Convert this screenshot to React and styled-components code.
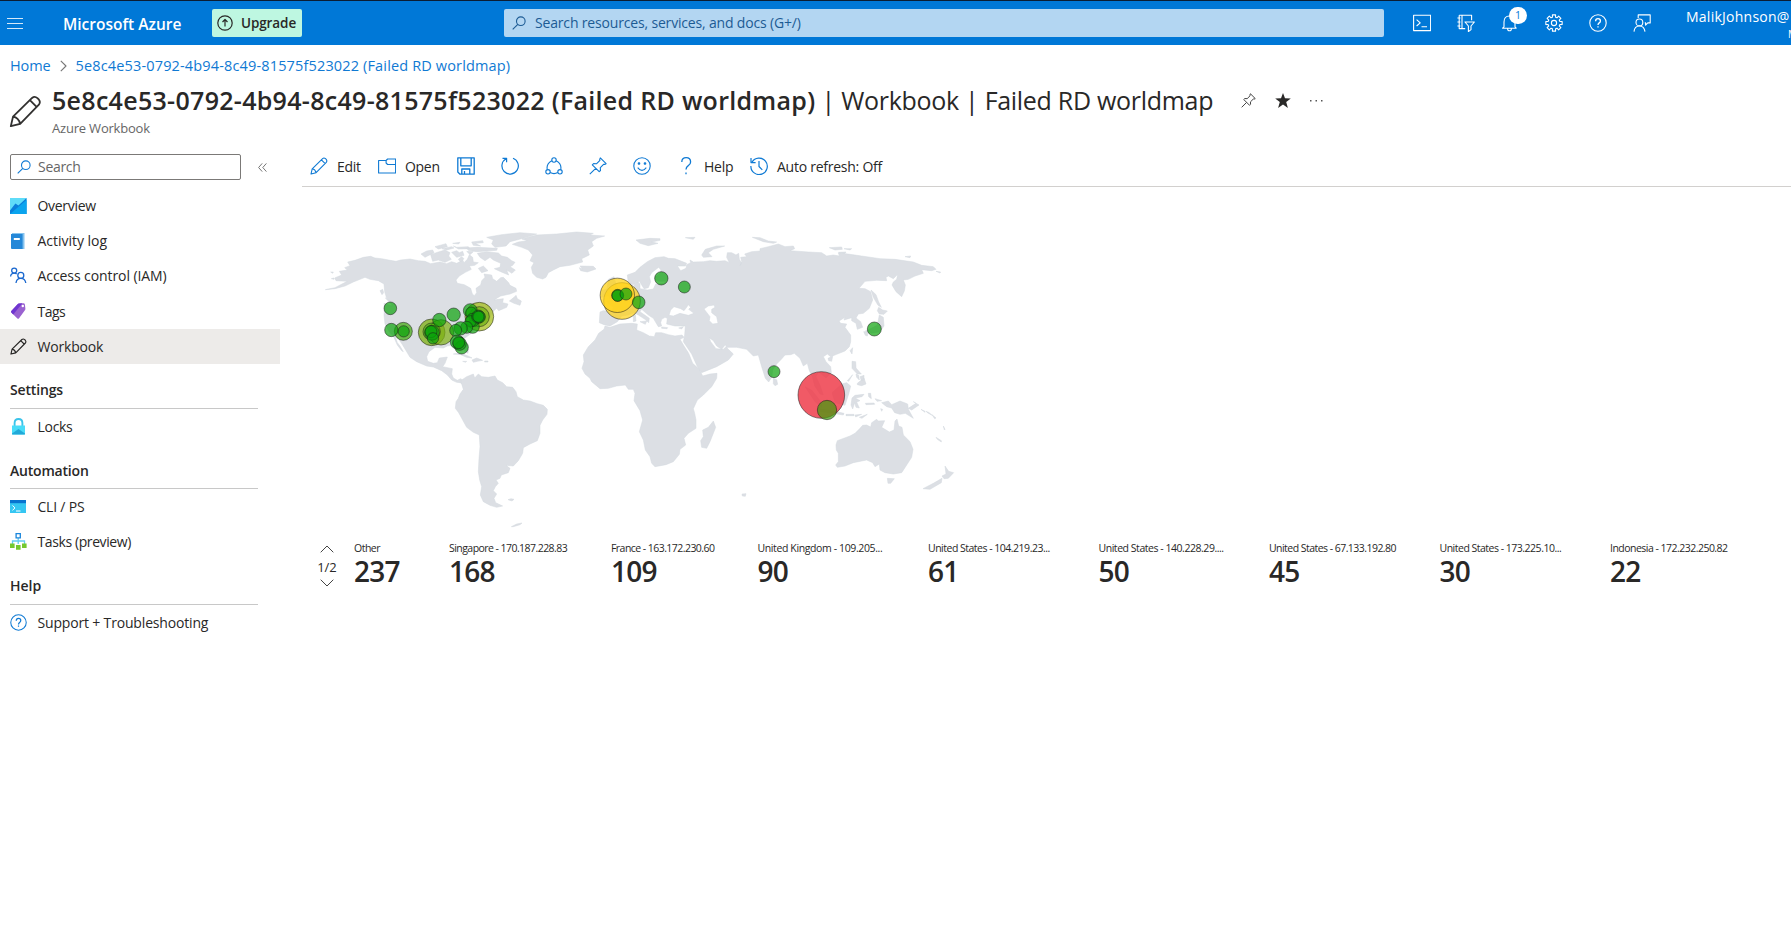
import React from "react";
import styled, { createGlobalStyle, css } from "styled-components";

const Global = createGlobalStyle`
  * { box-sizing: border-box; }
  body {
    margin: 0;
    overflow: hidden;
    background: #fff;
    color: #292827;
    font-family: "Open Sans", "Noto Sans", sans-serif;
    font-size: 14px;
  }
`;

const spaced = css`
  letter-spacing: ${(p) => p.$ls || 0}px;
  white-space: nowrap;
`;

/* ---------- header ---------- */
const Page = styled.div`
  width: 1791px;
  height: 951px;
  overflow: hidden;
`;
const Header = styled.header`
  display: flex;
  align-items: flex-start;
  height: 45px;
  border-top: 1px solid #0b1d33;
  background: #0078d7;
  color: #fff;
  & > * { flex: none; }
`;
const MenuButton = styled.div`
  display: flex;
  flex-direction: column;
  gap: 4px;
  width: 16px;
  margin: 17px 0 0 7px;
  & > i {
    height: 1px;
    background: #d5e9f9;
  }
`;
const Brand = styled.div`
  ${spaced}
  width: 149px;
  padding-left: 40px;
  margin-top: 11px;
  font-size: 15.5px;
  line-height: 24px;
  font-weight: 600;
`;
const UpgradeButton = styled.div`
  display: flex;
  align-items: center;
  width: 90px;
  height: 28px;
  margin: 8px 0 0 40px;
  padding-left: 5px;
  border-radius: 2px;
  background: #bef7e1;
  color: #292827;
  svg { flex: none; margin-right: 8px; }
`;
const UpgradeText = styled.span`
  ${spaced}
  font-weight: 600;
  font-size: 13.5px;
`;
const GlobalSearch = styled.div`
  display: flex;
  align-items: center;
  width: 880px;
  height: 28px;
  margin: 8px 0 0 202px;
  padding-left: 8px;
  gap: 9px;
  border-radius: 2px;
  background: #b3d6f2;
  color: #1c5b94;
`;
const SearchText = styled.span`
  ${spaced}
  line-height: 20px;
  font-size: 14px;
`;
const HeaderIcons = styled.div`
  display: flex;
  gap: 26px;
  margin: 13px 0 0 29px;
`;
const IconSlot = styled.div`
  position: relative;
  width: 18px;
  height: 18px;
  svg { display: block; }
`;
const Badge = styled.span`
  position: absolute;
  left: 8px;
  top: -7px;
  width: 18px;
  height: 17px;
  border-radius: 9px;
  background: #fff;
  color: #0078d7;
  font-size: 10.5px;
  line-height: 16px;
  text-align: center;
`;
const Account = styled.div`
  width: 140px;
  margin: 6px 0 0 35px;
`;
const AccountName = styled.div`
  ${spaced}
  font-size: 14px;
  line-height: 20px;
`;
const Directory = styled.div`
  padding-left: 102px;
  font-size: 10px;
  line-height: 14px;
`;

/* ---------- title area ---------- */
const Breadcrumb = styled.nav`
  display: flex;
  align-items: center;
  height: 20px;
  margin: 10px 0 0 10px;
  color: #1079d3;
  svg { margin: 1px 9px 0 9px; }
`;
const Crumb = styled.span`
  ${spaced}
  font-size: 14.5px;
`;
const TitleBar = styled.div`
  display: flex;
  height: 66px;
  padding-left: 9px;
`;
const TitleIcon = styled.div`
  width: 43px;
  padding-top: 20px;
`;
const TitleRow = styled.h1`
  display: flex;
  align-items: center;
  height: 36px;
  margin: 7px 0 0;
  font-size: 25px;
  font-weight: 400;
`;
const TitlePart = styled.span`
  ${spaced}
  white-space: pre;
  font-weight: ${(p) => (p.$strong ? 600 : 400)};
`;
const TitleActions = styled.span`
  display: flex;
  align-items: center;
  gap: 19px;
  margin-left: 28px;
`;
const Subtitle = styled.div`
  ${spaced}
  padding-top: 1px;
  font-size: 13px;
  line-height: 18px;
  color: #666;
`;

/* ---------- body ---------- */
const Body = styled.div`
  display: flex;
  align-items: flex-start;
`;
const Sidebar = styled.aside`
  width: 280px;
  margin-right: 22px;
  flex: none;
`;
const MenuSearchRow = styled.div`
  display: flex;
  align-items: center;
  height: 26px;
  margin: 13px 0 8px 10px;
`;
const MenuSearch = styled.div`
  display: flex;
  align-items: center;
  gap: 7px;
  width: 231px;
  height: 26px;
  margin-right: 17px;
  padding: 0 0 1px 6px;
  border: 1px solid #7b7977;
  border-radius: 2px;
  color: #666;
`;
const MenuItem = styled.div`
  display: flex;
  align-items: center;
  height: 35.2px;
  padding-left: 10px;
  background: ${(p) => (p.$active ? "#edebe9" : "transparent")};
  svg { flex: none; margin-right: 10.5px; }
`;
const MenuLabel = styled.span`
  ${spaced}
  font-size: 14px;
`;
const SectionTitle = styled.div`
  ${spaced}
  width: 248px;
  height: 45px;
  margin-left: 10px;
  padding-top: 15.5px;
  border-bottom: 1px solid #c8c8c8;
  font-size: 14px;
  line-height: 22px;
  font-weight: 600;
`;
const Content = styled.main`
  flex: 1;
`;
const Toolbar = styled.div`
  display: flex;
  align-items: center;
  height: 46px;
  padding: 5px 0 0 8px;
  border-bottom: 1px solid #d2d0ce;
`;
const Command = styled.div`
  display: flex;
  align-items: center;
  width: ${(p) => p.$w}px;
  svg { flex: none; margin-right: 9px; }
`;
const MapArea = styled.div`
  height: 343px;
  padding: 33px 0 0 8px;
  svg { display: block; }
`;
const Metrics = styled.div`
  display: flex;
  margin-top: 9px;
`;
const Pager = styled.div`
  display: flex;
  flex-direction: column;
  align-items: center;
  width: 20px;
  margin: 6px 17px 0 15px;
`;
const PageCount = styled.span`
  ${spaced}
  margin: 5px 0 3px;
  font-size: 13px;
  line-height: 18px;
`;
const Metric = styled.div`
  width: ${(p) => p.$w}px;
  flex: none;
`;
const MetricLabel = styled.div`
  ${spaced}
  font-size: 10.5px;
  line-height: 18px;
`;
const MetricValue = styled.div`
  ${spaced}
  font-size: 28px;
  line-height: 29px;
  font-weight: 600;
`;

/* ---------- icons ---------- */
const Icon = ({ s = 18, h, vb = "0 0 18 18", c = "currentColor", w = 1.1, children }) => (
  <svg width={s} height={h || s} viewBox={vb} fill="none" stroke={c} strokeWidth={w} strokeLinejoin="round">
    {children}
  </svg>
);
const Blue = "#0f7ad4";
const Pencil = ({ s, c, w }) => (
  <Icon s={s} c={c} w={w}>
    <path d="M1 17l1.2-5.2L12.6 1.6q1.4-1.2 2.9.1l.7.7q1.2 1.4.1 2.9L6.1 15.7zM2.2 11.8q3 .5 3.9 3.9M11.4 2.8l3.8 3.8" />
  </Icon>
);
const Magnifier = ({ c }) => (
  <Icon s={14} vb="0 0 14 14" c={c}>
    <circle cx="8.8" cy="5.2" r="4.3" />
    <path d="M5.8 8.3L.7 13.4" />
  </Icon>
);
const Pin = ({ s = 18, c = Blue, w }) => (
  <Icon s={s} c={c} w={w}>
    <path d="M11.3.9l5.8 5.8-1.4.7-.9-.2-3.5 3.5.2 2.8-1.3 1.2-6.9-6.9 1.3-1.2 2.8.2 3.5-3.5-.2-.9zM6.7 11.3L.8 17.2" />
  </Icon>
);
const Help = ({ s = 18, c }) => (
  <Icon s={s} c={c}>
    <circle cx="9" cy="9" r="8.2" />
    <path d="M6.6 7.2q0-2.5 2.4-2.5t2.4 2.2q0 1.2-1.2 2T9 11M9 12.2v1.4" strokeWidth="1.3" />
  </Icon>
);

const gearPath = (() => {
  const points = [];
  for (let i = 0; i < 8; i++) {
    const a = (i * Math.PI) / 4;
    [[-0.27, 6], [-0.19, 8.3], [0.19, 8.3], [0.27, 6]].forEach(([d, r]) => {
      points.push(`${(9 + r * Math.sin(a + d)).toFixed(2)},${(9 - r * Math.cos(a + d)).toFixed(2)}`);
    });
  }
  return `M${points.join("L")}Z`;
})();

const headerIcons = [
  <Icon key="shell"><path d="M.6 1.2h17v15.4H.6zM3.6 5.6l3.6 3.2L3.6 12M8.5 12.8H14" /></Icon>,
  <Icon key="filter"><path d="M2.2 1.2h12.4v5M2.2 1.2v13.4h6M5 1.2v13.4M.4 4h3M.4 8h3M.4 12h3M8 8h9.4l-3.4 4v3.6l-2.6 2V12z" /></Icon>,
  <Icon key="bell"><path d="M3 12.8V8q0-6 5.5-6t5.5 6v4.8l1.2 1.4H1.6zM6.6 14.4q0 2.4 1.9 2.4t1.9-2.4" /></Icon>,
  <Icon key="gear"><path d={gearPath} /><circle cx="9" cy="9" r="2.6" /></Icon>,
  <Help key="help" />,
  <Icon key="feedback"><path d="M5.2 4V.9h12v8h-2.4l-2.2 2.2V8.9h-.8" /><circle cx="6.4" cy="8.4" r="3.4" /><path d="M1 17.6q.6-5.6 5.4-5.6t5.6 5.6" /></Icon>,
];

const menuIcons = {
  overview: (
    <svg width="17" height="16" viewBox="0 0 17 16">
      <path d="M0 0h16.5v16H0z" fill="#5fdcf8" />
      <path d="M0 12.4L5.4 5.6l3 2L16.5 0v16H0z" fill="#0b7fda" />
      <path d="M0 16L16.500 2v14z" fill="#0aa4ee" />
    </svg>
  ),
  log: (
    <svg width="17" height="16" viewBox="0 0 17 16">
      <path d="M2 0h12.500v16H2z" fill="#86c3ee" /><path d="M1 1h11.600v15H2q-1 0-1-1z" fill="#2588d8" /><path d="M3.800 5h6v2h-6z" fill="#fff" />
    </svg>
  ),
  access: (
    <Icon s={17} vb="0 0 17 17" c="#1a68cf" w={1.3}>
      <circle cx="4.200" cy="3.600" r="2.500" /><path d="M.6 9.500q.3-3.400 3.600-3.400 1.600 0 2.500.9" />
      <circle cx="10.800" cy="8.400" r="3" /><path d="M6 16q.5-4.600 4.800-4.600T15.800 16" />
    </Icon>
  ),
  tags: (
    <svg width="17" height="17" viewBox="0 0 17 17">
      <path d="M1.300 8L7.600 1.200q.5-.6 1.300-.7l4.500-.3q1.300 0 1.500 1.200l.5 4.300q.1.800-.5 1.500l-6 8.200q-.7.800-1.500 0L1.300 9.400q-.6-.7 0-1.400z" fill="#9a62d0" />
      <path d="M1.300 8L7.600 1.200q.5-.6 1.300-.7l3.500-.2L3.200 11.400l-1.900-2q-.6-.7 0-1.400z" fill="#6f35d0" /><circle cx="12.800" cy="3" r="1.200" fill="#fff" />
    </svg>
  ),
  workbook: <Pencil s={17} c="#252423" w={1.2} />,
  lock: (
    <svg width="17" height="17" viewBox="0 0 17 17">
      <path d="M4.600 8V5q0-4 3.900-4t3.900 4v3" fill="none" stroke="#3cc4ea" strokeWidth="1.900" />
      <path d="M2 7.500h13v8q0 1-1 1H3q-1 0-1-1z" fill="#4adcf8" /><path d="M2 16.500v-.9L8.500 11l6.500 4.600v.9z" fill="#22a9d8" />
    </svg>
  ),
  cli: (
    <svg width="17" height="13" viewBox="0 0 17 13">
      <path d="M0 0h16v13H0z" fill="#35c6f2" /><path d="M0 0h16v3.200H0z" fill="#0874cf" />
      <path d="M2.500 5.500L5 7.900l-2.500 2.400M6 11h4.500" fill="none" stroke="#fff" />
    </svg>
  ),
  tasks: (
    <svg width="17" height="17" viewBox="0 0 17 17">
      <path d="M8.200 5v6M2.500 12V8h12v4" fill="none" stroke="#62cdf0" strokeWidth="1.300" />
      <path d="M6.100.7h4.200v4.200H6.100z" fill="#fff" stroke="#1a86dc" strokeWidth="1.300" />
      <path d="M0 10.500h4.600v4.500H0zM12 10.500h4.600v4.500H12zM6 12h4.600v4.700H6z" fill="#76c82e" />
    </svg>
  ),
  help: <Help s={17} c={Blue} />,
};

/* ---------- map ---------- */
const americas = [
  "M46,209L75,203 100,190 112,184 78,182 74,174 95,165 88,154 112,150 104,143 120,137 113,126 135,121 160,112 182,109 195,114 215,116 240,121 258,124 272,120 300,117 325,122 345,124 362,131 390,126 410,131 425,125 440,130 452,124 456,116 462,128 472,118 478,104 488,112 490,126 505,128 494,136 478,138 484,148 466,157 448,168 438,180 442,190 463,194 482,205 487,222 493,227 500,218 498,205 512,195 515,182 525,172 522,162 545,165 548,176 560,184 572,173 580,172 596,188 600,196 618,205 620,214 600,222 572,228 552,240 565,238 580,236 578,248 594,252 590,262 566,272 560,265 545,278 540,295 520,308 500,322 484,340 462,356 464,368 475,388 474,400 465,395 455,378 442,372 425,376 412,378 400,384 375,382 357,395 350,410 353,424 370,430 382,428 388,414 412,411 405,430 398,440 427,446 425,462 430,474 442,481 452,476 460,482 458,492 450,488 440,487 425,480 412,465 395,452 370,441 350,438 320,425 300,412 290,395 276,372 262,352 256,350 262,368 270,378 280,395 275,392 262,375 250,348 238,336 225,312 222,285 224,262 222,250 245,258 247,250 230,235 224,215 222,192 205,182 180,178 165,172 150,178 130,186 105,198 75,206Z",
  "M452,482L470,470 490,462 494,474 505,462 515,470 535,472 555,468 562,480 578,488 590,500 608,502 618,515 622,530 640,540 660,543 682,551 700,556 712,568 711,583 698,600 690,616 690,640 682,662 660,672 640,683 638,700 625,722 610,738 588,736 600,745 595,758 574,765 570,775 558,780 565,790 556,800 550,812 560,822 552,835 557,848 578,858 560,862 540,856 520,845 511,825 515,800 509,780 505,755 507,715 510,680 508,645 490,637 470,622 458,600 446,578 436,565 438,545 445,535 450,522 460,508Z",
  "M607,73L625,66 652,62 636,57 680,45 740,42 800,36 850,40 840,45 884,48 860,55 845,65 850,78 833,90 838,105 815,116 818,126 780,136 750,140 730,150 715,158 708,172 698,177 680,172 668,160 664,142 672,128 660,122 668,105 655,90 635,82Z",
  "M545,72L550,60 530,52 575,44 630,38 680,42 650,52 620,60 600,65 588,78 555,82Z",
  "M502,100L530,95 565,99 575,108 592,112 605,122 615,127 608,136 600,140 616,150 606,160 590,150 596,165 572,155 553,146 570,142 572,130 550,120 540,112 525,122 510,112Z",
  "M362,104L385,96 405,90 420,98 416,108 424,118 405,127 385,120 368,124Z M333,102L350,93 368,90 372,98 345,112Z",
  "M375,80L408,71 412,80 385,87Z M396,86L425,80 432,84 410,90Z M430,78L440,82 475,80 480,86 445,87Z M485,66L518,62 520,68 496,70 512,78 490,76Z M470,84L500,82 562,85 560,91 500,95 475,91Z M425,97L440,92 448,98 458,94 462,106 440,112Z M470,94L490,95 480,104Z M428,70L450,67 446,72Z M505,145L520,138 534,152 515,158Z M445,118L455,110 462,116 452,126Z",
  "M598,243L612,232 618,226 622,236 634,243 630,256 612,250Z M210,212l8,-4 3,10 -5,6Z M226,234L244,244 246,254Z M808,143L818,147 810,138 850,139 858,147 832,156 812,152Z M430,402L450,399 472,407 486,414 470,412 452,404Z M486,420L500,414 518,421 502,424 490,427Z M458,424l12,0 -3,3Z M524,423l10,0 0,3 -10,0Z M594,839L603,836 612,838 606,843Z M604,920L620,912 636,909 630,914 610,920Z M62,156l8,0 -2,4Z M64,176l8,-2 0,4Z",
];
const euroAfrica = [
  "M135,318L150,322 180,312 215,310 232,312 230,330 250,338 268,348 283,350 287,338 305,338 325,344 345,348 366,345 372,352 360,358 372,378 386,400 398,430 418,448 428,468 450,462 471,460 470,475 455,500 430,525 412,540 400,566 404,580 408,600 408,625 385,640 372,655 377,675 360,688 358,703 340,725 318,734 285,740 275,730 270,710 256,690 250,660 238,635 248,600 240,572 222,542 225,520 220,508 205,508 196,495 170,498 145,505 120,506 95,485 90,475 75,462 66,445 72,425 70,405 85,380 105,360 116,340 132,328Z",
  "M460,603L467,622 450,665 440,685 425,682 422,662 430,650 428,630 445,622Z M546,822L558,821 556,829 547,828Z",
  "M120,276L130,272 155,276 160,262 145,250 140,243 165,240 180,228 205,218 225,210 222,195 234,186 240,192 240,206 262,210 280,207 287,192 310,190 328,184 296,184 285,180 285,172 300,160 303,150 296,142 275,158 268,170 272,185 265,203 252,206 238,184 220,194 205,190 202,165 225,157 240,142 262,125 285,113 312,110 325,115 345,116 365,124 380,130 376,138 352,138 362,152 378,145 380,134 392,128 390,120 400,126 430,125 450,122 470,124 495,122 508,128 500,112 502,98 515,98 528,105 536,100 538,118 545,130 540,137 545,125 542,112 560,110 554,102 575,95 600,93 600,86 625,80 655,72 675,80 700,78 704,86 690,92 745,96 785,98 800,108 820,105 838,108 835,98 870,103 905,108 960,116 1005,118 1060,126 1085,136 1120,140 1128,148 1115,152 1085,149 1090,160 1065,168 1045,178 1030,180 1036,195 1033,213 1025,230 1008,215 996,195 1000,186 1010,178 1013,163 1000,176 985,168 978,172 980,182 950,181 915,184 897,205 915,206 932,215 938,240 928,265 910,280 895,282 888,294 902,305 908,322 892,328 888,310 875,302 875,293 852,300 855,292 837,303 842,310 860,312 855,322 872,345 872,365 868,380 855,393 830,403 812,410 802,402 790,410 798,425 812,440 814,458 798,474 788,466 776,455 768,470 780,495 790,525 780,522 764,498 757,470 748,452 742,430 730,438 720,415 703,400 692,404 675,405 664,418 650,432 638,450 636,470 626,486 616,475 605,440 595,405 580,408 560,388 530,382 500,382 496,374 485,388 470,378 460,362 448,353 452,365 468,386 490,388 498,380 505,388 520,402 505,420 470,440 425,458 412,440 395,402 370,365 374,345 376,318 345,318 320,312 322,295 315,292 305,298 302,308 305,318 295,320 280,295 265,285 245,268 240,275 268,295 266,308 255,298 235,285 222,278 205,285 185,288 172,305 150,318 132,314 118,308Z",
  "M145,178L162,170 170,200 185,225 180,235 150,238 140,215Z M126,212l16,-6 0,22 -18,4Z",
  "M240,305l20,-2 -4,10Z M220,285l6,-2 2,20 -8,2Z M305,321l18,2 -2,3 -16,-1Z M356,324l14,-4 -5,7Z",
  "M425,105L436,88 470,78 494,78 460,88 445,98 456,110 430,112Z M228,60L270,55 300,56 300,61 275,66 294,70 265,77 240,70Z M376,53L405,52 400,58Z M577,52L600,53 625,63 650,66 640,70 610,65Z M640,475l10,4 3,14 -8,4 -5,-6Z",
];
const asiaPacific = [
  "M268,83L305,81 307,88 285,90Z M312,86L335,86 330,90Z M296,97l22,-1 -4,5Z M495,110L512,108 510,113Z M588,154l14,2 -2,3Z",
  "M393,210L408,224 416,246 424,262 414,256 400,232Z M412,272L416,262 428,270 442,273 432,283 418,282Z M418,285L430,292 432,318 420,335 395,340 376,333 400,322 412,315Z M371,335L384,335 382,348 376,346Z M330,392L338,383 336,402Z M264,415L278,409 275,424 266,422Z",
  "M336,424L347,425 348,444 364,462 352,462 336,445Z M348,462l8,4 2,14 -8,-8Z M360,470l12,-4 0,14 -8,2Z M352,490L372,474 378,492 365,497 352,494Z M322,482L338,464 326,484Z",
  "M276,518L305,492 320,488 332,498 326,522 315,556 285,548Z M195,500L215,510 245,548 245,562 225,545Z M236,566L275,572 312,580 310,585 240,574Z M318,583l24,0 0,4 -24,0Z M345,585l20,-2 -18,8Z M358,592L382,583 366,595Z",
  "M336,534L345,526 372,523 366,530 346,534 360,542 350,546 358,564 348,562 344,548 338,567 333,555Z M385,520l7,0 2,16 -8,-6Z M376,550l26,-1 2,4 -26,1Z M405,536l20,6 -14,2Z",
  "M425,548L445,543 455,554 480,543 503,552 505,568 520,595 496,580 480,583 464,578 455,564 440,560Z M505,565L528,550 520,545 537,555 515,570Z M543,568l12,6 0,3Z M558,574l10,4 8,8 -14,-8Z M576,584l12,10 -4,2Z M610,618l5,10 -2,2Z M588,652l16,10 0,4 -12,-8Z M422,566l6,2 -3,6Z",
  "M288,675L292,662 330,648 345,640 360,625 368,616 380,615 392,621 395,608 410,598 415,603 434,602 425,622 448,636 462,630 465,603 471,597 476,618 486,622 490,645 510,665 519,688 515,712 500,735 485,758 460,762 435,758 420,750 418,732 405,740 398,728 380,720 340,728 315,738 292,742 287,735 295,725 295,700 289,690Z M442,775L463,776 452,790 444,790Z",
  "M615,738L626,754 641,758 625,775 612,776 606,768 618,762Z M606,775L604,788 570,808 549,806 580,790Z",
];
const G = "#0ca30c";
const markers = [
  [936, 243, 55, "#ffd117", 0.72], [922, 226, 51.500, "#ffd117", 0.75], [508, 290, 43, "#a4bc14", 0.72],
  [1534, 525, 70, "#ee3a49", 0.84], [365, 337, 40, "#7db012", 0.75], [393, 337, 38, "#7db012", 0.7],
  [508, 290, 30, "#6fb012", 0.7], [280, 334, 27, "#3fa80c", 0.7], [365, 335, 26, "#3fa80c", 0.6], [1551, 570, 29, "#3f9c0c", 0.7],
  [366, 338, 22, G], [363, 335, 18, G], [369, 355, 17, G], [281, 334, 17, G], [244, 330, 20, G], [241, 265, 19, G],
  [388, 300, 20, G], [431, 284, 20, G], [488, 320, 20, G], [481, 272, 21, G], [484, 278, 17, G], [488, 300, 20, G],
  [482, 304, 17, G], [470, 322, 18, G], [452, 325, 20, G], [437, 331, 18, G], [505, 290, 20, G], [508, 291, 18, G], [505, 290, 17, G],
  [442, 366, 21, G], [455, 382, 20, G], [449, 371, 20, G], [446, 368, 18, G],
  [923, 226, 18, G], [923, 227, 17, G], [948, 222, 18, G], [986, 247, 19, G], [1054, 175, 20, G], [1123, 201, 18, G],
  [1392, 455, 18, G], [1693, 327, 21, G],
];

const WorldMap = () => (
  <svg width="660" height="310" viewBox="0 0 1980 930">
    <g fill="#dcdfe4" stroke="#d3d8de" strokeWidth="1.500" strokeLinejoin="round">
      {americas.map((d) => <path key={d} d={d} />)}
      <g transform="translate(750)">
        {euroAfrica.map((d) => <path key={d} d={d} />)}
        <path fill="#fff" d="M327,286L332,270 342,260 362,266 372,272 380,262 385,254 392,262 386,268 402,280 385,286 360,280 340,288Z M432,267L445,258 462,255 465,262 455,268 455,278 470,290 474,310 458,312 448,302 450,290Z" />
      </g>
      <g transform="translate(1290)">{asiaPacific.map((d) => <path key={d} d={d} />)}</g>
    </g>
    {markers.map(([x, y, r, fill, o = 0.7], i) => (
      <circle key={i} cx={x} cy={y} r={r} fill={fill} fillOpacity={o} stroke="#1c1c1c" strokeOpacity="0.6" strokeWidth="2.600" />
    ))}
  </svg>
);

const metrics = [
  ["Other", "237", 95, -0.5], ["Singapore - 170.187.228.83", "168", 162, -0.55], ["France - 163.172.230.60", "109", 146.500, -0.55],
  ["United Kingdom - 109.205...", "90", 170.500, -0.38], ["United States - 104.219.23...", "61", 170.500, -0.5], ["United States - 140.228.29....", "50", 170.500, -0.46],
  ["United States - 67.133.192.80", "45", 170.500, -0.54], ["United States - 173.225.10...", "30", 170.500, -0.5], ["Indonesia - 172.232.250.82", "22", 170.500, -0.52],
];

const Item = ({ icon, label, active, ls = -0.2 }) => (
  <MenuItem $active={active}>
    {menuIcons[icon]}
    <MenuLabel $ls={ls}>{label}</MenuLabel>
  </MenuItem>
);

export default function App() {
  return (
    <Page>
      <Global />
      <Header>
        <MenuButton><i /><i /><i /></MenuButton>
        <Brand $ls={0}>Microsoft Azure</Brand>
        <UpgradeButton>
          <Icon s={16} vb="0 0 16 16" w={1.2}><circle cx="8" cy="8" r="7.200" /><path d="M8 11.500v-7M5.500 7L8 4.500 10.500 7" /></Icon>
          <UpgradeText $ls={-0.1}>Upgrade</UpgradeText>
        </UpgradeButton>
        <GlobalSearch>
          <Magnifier />
          <SearchText $ls={-0.17}>Search resources, services, and docs (G+/)</SearchText>
        </GlobalSearch>
        <HeaderIcons>
          {headerIcons.map((icon, i) => (
            <IconSlot key={i}>{icon}{i === 2 && <Badge>1</Badge>}</IconSlot>
          ))}
        </HeaderIcons>
        <Account>
          <AccountName $ls={0.25}>MalikJohnson@</AccountName>
          <Directory>M</Directory>
        </Account>
      </Header>

      <Breadcrumb>
        <Crumb $ls={-0.1}>Home</Crumb>
        <Icon s={7} h={12} vb="0 0 7 12" c="#777"><path d="M.8.8L6 6 .8 11.200" /></Icon>
        <Crumb $ls={0.15}>5e8c4e53-0792-4b94-8c49-81575f523022 (Failed RD worldmap)</Crumb>
      </Breadcrumb>
      <TitleBar>
        <TitleIcon><Pencil s={33} c="#323130" w={1} /></TitleIcon>
        <div>
          <TitleRow>
            <TitlePart $strong $ls={0.3}>5e8c4e53-0792-4b94-8c49-81575f523022 (Failed RD worldmap)</TitlePart>
            <TitlePart $ls={-0.3}> | Workbook | Failed RD worldmap</TitlePart>
            <TitleActions>
              <Pin s={15} c="#444" w={1.2} />
              <svg width="16" height="15" viewBox="0 0 16 15"><path d="M8 0l2 5.300 5.800.2-4.600 3.500L12.900 15 8 11.500 3.100 15l1.700-6L.2 5.500 6 5.300z" fill="#292827" /></svg>
              <svg width="13" height="3" viewBox="0 0 13 3" fill="#555"><path d="M0 1h1.500v1.500H0zM5.500 1H7v1.500H5.500zM11 1h1.500v1.500H11z" /></svg>
            </TitleActions>
          </TitleRow>
          <Subtitle $ls={-0.2}>Azure Workbook</Subtitle>
        </div>
      </TitleBar>

      <Body>
        <Sidebar>
          <MenuSearchRow>
            <MenuSearch><Magnifier c={Blue} /><MenuLabel $ls={-0.3}>Search</MenuLabel></MenuSearch>
            <Icon s={9} vb="0 0 9 9" c="#666" w={0.9}><path d="M4.200.4L.6 4.500l3.600 4.100M8.400.4L4.800 4.500l3.600 4.100" /></Icon>
          </MenuSearchRow>
          <Item icon="overview" label="Overview" ls={-0.3} />
          <Item icon="log" label="Activity log" ls={-0.03} />
          <Item icon="access" label="Access control (IAM)" ls={-0.08} />
          <Item icon="tags" label="Tags" ls={-0.5} />
          <Item icon="workbook" label="Workbook" active />
          <SectionTitle $ls={-0.15}>Settings</SectionTitle>
          <Item icon="lock" label="Locks" ls={-0.3} />
          <SectionTitle $ls={-0.2}>Automation</SectionTitle>
          <Item icon="cli" label="CLI / PS" />
          <Item icon="tasks" label="Tasks (preview)" ls={-0.4} />
          <SectionTitle>Help</SectionTitle>
          <Item icon="help" label="Support + Troubleshooting" ls={-0.17} />
        </Sidebar>
        <Content>
          <Toolbar>
            <Command $w={68}><Pencil s={18} c={Blue} /><MenuLabel $ls={-0.3}>Edit</MenuLabel></Command>
            <Command $w={79}><Icon c={Blue}><path d="M.6 3.500h7.500L9.600 2h8v14H.6zM17.600 7.500h-8L8.100 6V3.500" /></Icon><MenuLabel $ls={-0.3}>Open</MenuLabel></Command>
            <Command $w={44}><Icon c={Blue} w={1.300}><path d="M.8.800h16.400v16.400H3L.8 15zM3.800.8v8h10.400v-8M4.800 17v-5h8v5M7.500 17v-3" /></Icon></Command>
            <Command $w={44}><Icon c={Blue} w={1.200}><path d="M12 1.200A8.200 8.200 0 1 1 5 1.800M1.500 1.300H5.600V5.300" /></Icon></Command>
            <Command $w={44}><Icon c={Blue}><circle cx="9" cy="3" r="2.200" /><circle cx="3" cy="14.800" r="2.200" /><circle cx="15" cy="14.800" r="2.200" /><path d="M6.800 3.800Q1 7 2.300 12.600M11.200 3.800Q17 7 15.700 12.600M5.200 15.600q3.800 2 7.600 0" /></Icon></Command>
            <Command $w={44}><Pin /></Command>
            <Command $w={44}><Icon c={Blue}><circle cx="9" cy="9" r="8.200" /><path d="M4.700 10.600q4.300 5.600 8.600 0" /><circle cx="6" cy="6.500" r=".8" fill={Blue} /><circle cx="12" cy="6.500" r=".8" fill={Blue} /></Icon></Command>
            <Command $w={73}><Icon c={Blue} w={1.300}><path d="M4.800 5q0-4.300 4.400-4.300T13.600 5q0 2.300-2.300 3.600T9 12.600M9 15.500v1.800" /></Icon><MenuLabel $ls={-0.2}>Help</MenuLabel></Command>
            <Command><Icon c={Blue} w={1.200}><path d="M2 5.200A8.200 8.200 0 1 1 .9 9M1 1v4.600h4.600M9 4v5.500l3.300 3.300" /></Icon><MenuLabel $ls={-0.25}>Auto refresh: Off</MenuLabel></Command>
          </Toolbar>
          <MapArea><WorldMap /></MapArea>
          <Metrics>
            <Pager>
              <Icon s={14} h={8} vb="0 0 14 8" c="#444" w={1}><path d="M.7 7.300L7 1l6.300 6.300" /></Icon>
              <PageCount>1/2</PageCount>
              <Icon s={14} h={8} vb="0 0 14 8" c="#444" w={1}><path d="M.7.7L7 7 13.300.7" /></Icon>
            </Pager>
            {metrics.map(([label, value, width, ls]) => (
              <Metric key={label} $w={width}>
                <MetricLabel $ls={ls}>{label}</MetricLabel>
                <MetricValue $ls={-0.7}>{value}</MetricValue>
              </Metric>
            ))}
          </Metrics>
        </Content>
      </Body>
    </Page>
  );
}
